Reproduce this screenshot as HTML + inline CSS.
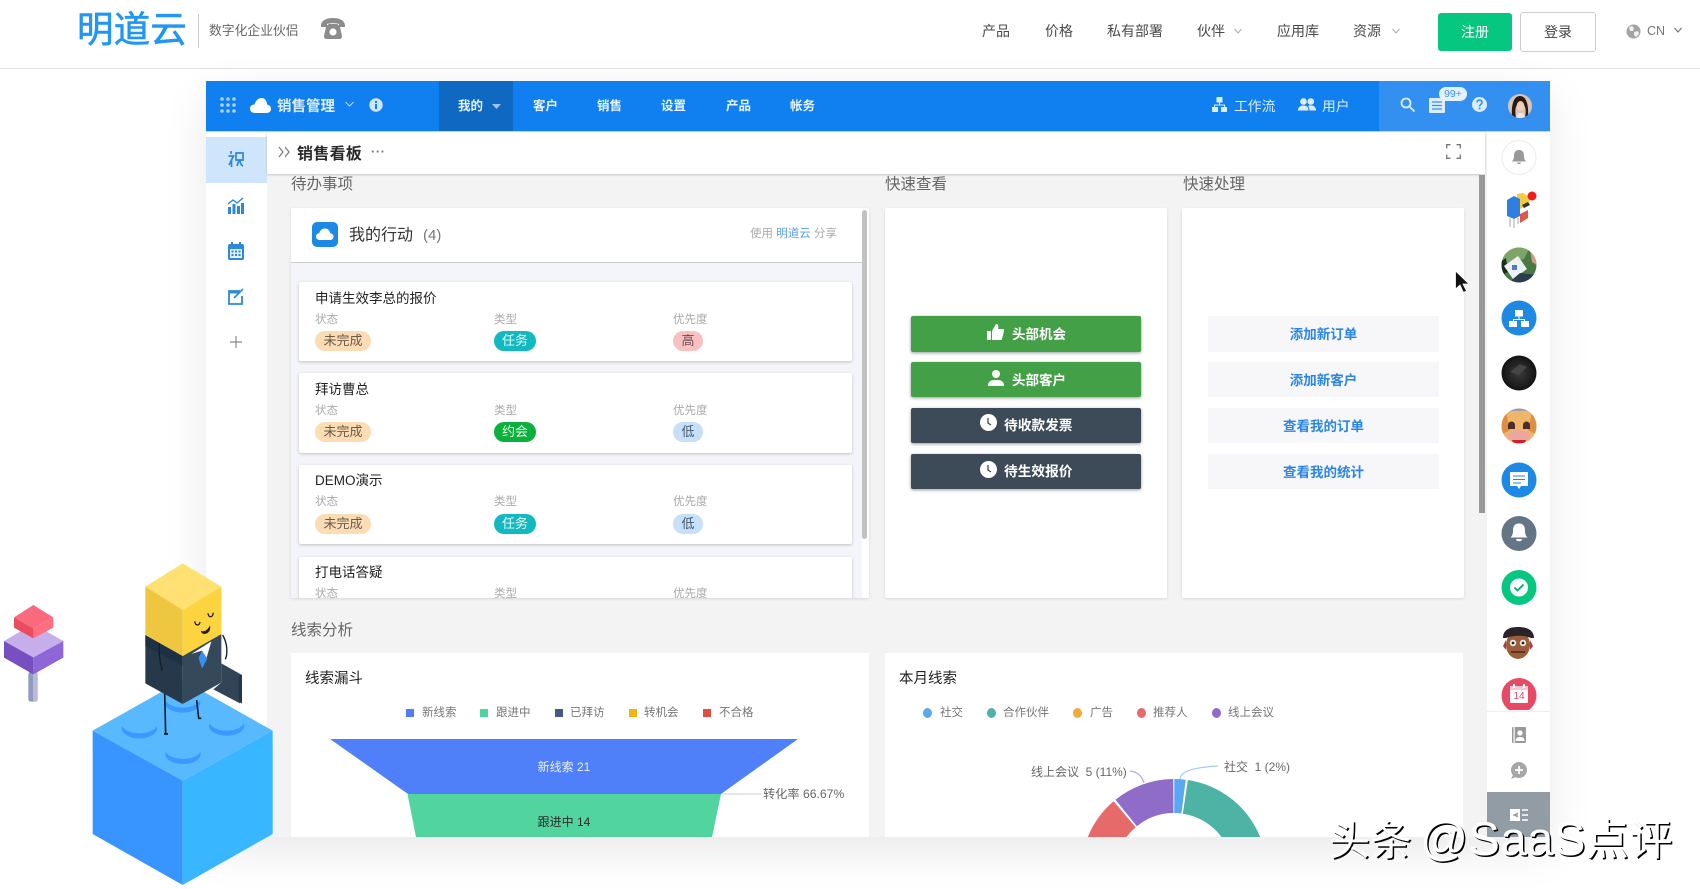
<!DOCTYPE html>
<html lang="zh"><head><meta charset="utf-8"><title>明道云</title>
<style>
html,body{margin:0;padding:0;background:#fff}
body{width:1700px;height:889px;position:relative;overflow:hidden;font-family:"Liberation Sans","Noto Sans CJK SC",sans-serif;color:#333;filter:blur(.3px)}
.a{position:absolute}
.t{position:absolute;white-space:nowrap;line-height:20px}
.nav{font-size:14px;color:#4a4a4a;top:21px}
.tab{font-size:12.5px;color:#e8f3ff;top:96px;font-weight:700}
.sec{font-size:15.5px;color:#666;line-height:20px}
.item{position:absolute;left:299px;width:553px;background:#fff;box-shadow:0 1px 3px rgba(0,0,0,.22);border-radius:2px;overflow:hidden}
.ttl{position:absolute;left:16px;top:calc(6px + var(--o));font-size:13.5px;color:#222;line-height:20px;white-space:nowrap}
.lb{position:absolute;top:calc(27px + var(--o));font-size:11.5px;color:#aaa;line-height:20px}
.pill{position:absolute;top:calc(48px + var(--o));height:20px;line-height:20px;border-radius:10px;text-align:center;font-size:13px}
.btn{position:absolute;left:911px;width:230px;border-radius:2px;box-shadow:0 1px 3px rgba(0,0,0,.4);color:#fff;font-size:13.5px;font-weight:700}
.btn2{position:absolute;left:1208px;width:231px;background:#f7f7f9;color:#2a86e6;font-size:13.5px;text-align:center;font-weight:700;line-height:37px}
.lg{font-size:11.5px;color:#777;top:703px}
.sq{position:absolute;top:709px;width:8px;height:8px}
.dot{position:absolute;top:708px;width:9px;height:10px;border-radius:50%}
</style></head><body>

<!-- top header -->
<div class="a" style="left:0;top:68px;width:1700px;height:1px;background:#e3e3e3"></div>
<div class="t" style="left:77px;top:10px;font-size:36.5px;line-height:40px;color:#2196f3;letter-spacing:.2px;-webkit-text-stroke:.6px #2196f3">明道云</div>
<div class="a" style="left:198px;top:14px;width:1px;height:34px;background:#ccc"></div>
<div class="t" style="left:209px;top:21px;font-size:12.8px;color:#666">数字化企业伙侣</div>
<svg class="a" style="left:321px;top:18px" width="24" height="22" viewBox="0 0 24 22"><path d="M0 8C0 2 6 0 12 0s12 2 12 8v1h-6V6c-3-1-9-1-12 0v3H0z" fill="#8c8c8c"/><path d="M5 9c1-2 3-3 3-3h8s2 1 3 3l2 9c0 2-1 3-3 3H6c-2 0-3-1-3-3z" fill="#8c8c8c"/><circle cx="12" cy="14" r="3.6" fill="#fff"/></svg>

<div class="t nav" style="left:982px">产品</div>
<div class="t nav" style="left:1045px">价格</div>
<div class="t nav" style="left:1107px">私有部署</div>
<div class="t nav" style="left:1197px">伙伴</div>
<svg class="a" style="left:1234px;top:28px" width="8" height="6"><path d="M.5 1l3.5 4 3.5-4" fill="none" stroke="#aaa"/></svg>
<div class="t nav" style="left:1277px">应用库</div>
<div class="t nav" style="left:1353px">资源</div>
<svg class="a" style="left:1392px;top:28px" width="8" height="6"><path d="M.5 1l3.5 4 3.5-4" fill="none" stroke="#aaa"/></svg>
<div class="a" style="left:1438px;top:13px;width:74px;height:38px;line-height:38px;background:#05c77f;border-radius:3px;color:#fff;text-align:center;font-size:14px">注册</div>
<div class="a" style="left:1520px;top:12px;width:74px;height:38px;line-height:39px;border:1px solid #ccc;border-radius:3px;color:#444;text-align:center;font-size:14px">登录</div>
<svg class="a" style="left:1626px;top:24px" width="15" height="15" viewBox="0 0 15 15"><circle cx="7.5" cy="7.5" r="7" fill="#a4a4a4"/><path d="M3 3l3-1 2 2-1 3-3 0zM8 8l4-1 1 3-3 3-2-2z" fill="#fff" opacity=".85"/></svg>
<div class="t" style="left:1647px;top:21px;font-size:12.5px;color:#777">CN</div>
<svg class="a" style="left:1674px;top:27px" width="8" height="6"><path d="M.5 1l3.5 4 3.5-4" fill="none" stroke="#666"/></svg>

<!-- app frame -->
<div class="a" style="left:206px;top:81px;width:1344px;height:756px;background:#fff;box-shadow:0 14px 42px rgba(0,0,0,.09)"></div>
<div class="a" style="left:206px;top:81px;width:1344px;height:50px;background:#1080f0"></div>
<div class="a" style="left:206px;top:131px;width:1344px;height:1px;background:#bcd9f6"></div>
<div class="a" style="left:439px;top:81px;width:74px;height:50px;background:#0f69c3"></div>
<div class="a" style="left:1379px;top:81px;width:171px;height:50px;background:#338ff0"></div>

<svg class="a" style="left:220px;top:97px" width="16" height="16" fill="#a9d2fb"><circle cx="2" cy="2" r="1.8"/><circle cx="8" cy="2" r="1.8"/><circle cx="14" cy="2" r="1.8"/><circle cx="2" cy="8" r="1.8"/><circle cx="8" cy="8" r="1.8"/><circle cx="14" cy="8" r="1.8"/><circle cx="2" cy="14" r="1.8"/><circle cx="8" cy="14" r="1.8"/><circle cx="14" cy="14" r="1.8"/></svg>
<svg class="a" style="left:250px;top:98px" width="21" height="15" viewBox="0 0 21 15"><path d="M5 15C2 15 0 13 0 10.500S2 6.500 4.500 6.500C5.500 3 8 0 11.500 0 15 0 17 3 17 6.500c2.500.5 4 2 4 4.500s-2 4-4.500 4z" fill="#fff"/></svg>
<div class="t" style="left:277px;top:97px;font-size:14.5px;font-weight:700;color:#dcedff">销售管理</div>
<svg class="a" style="left:345px;top:101px" width="9" height="6"><path d="M.5 1l4 4 4-4" fill="none" stroke="#bcdcff"/></svg>
<svg class="a" style="left:369px;top:98px" width="14" height="14"><circle cx="7" cy="7" r="6.700" fill="#cfe5fd"/><rect x="6" y="6" width="2" height="5" fill="#1080f0"/><rect x="6" y="3" width="2" height="2" fill="#1080f0"/></svg>

<div class="t tab" style="left:458px">我的</div>
<svg class="a" style="left:492px;top:104px" width="9" height="5"><path d="M0 0h9L4.500 5z" fill="#9cc6f2"/></svg>
<div class="t tab" style="left:533px">客户</div>
<div class="t tab" style="left:597px">销售</div>
<div class="t tab" style="left:661px">设置</div>
<div class="t tab" style="left:726px">产品</div>
<div class="t tab" style="left:790px">帐务</div>

<svg class="a" style="left:1212px;top:97px" width="15" height="15" fill="#dcedff"><rect x="4.500" y="0" width="6" height="5.500"/><rect x="0" y="10" width="6" height="5"/><rect x="9" y="10" width="6" height="5"/><path d="M7 5.500h1v2h5V10h-1V8.500H3V10H2V7.500h5z"/></svg>
<div class="t" style="left:1234px;top:97px;font-size:13.800px;color:#dcedff">工作流</div>
<svg class="a" style="left:1298px;top:98px" width="18" height="13" fill="#dcedff"><circle cx="5.500" cy="3.500" r="3.300"/><circle cx="12.800" cy="3.500" r="3.300"/><path d="M0 12.500c0-3 2-5 5.500-5s5 2 5 5zM11.500 12.500c0-2-.5-3.500-1.500-4.500 3-1.500 8-.5 8 4.500z"/></svg>
<div class="t" style="left:1322px;top:97px;font-size:13.800px;color:#dcedff">用户</div>
<svg class="a" style="left:1400px;top:97px" width="16" height="15" fill="none" stroke="#dcedff" stroke-width="1.800"><circle cx="6" cy="6" r="4.500"/><path d="M9.500 9.500l5 5"/></svg>
<svg class="a" style="left:1429px;top:98px" width="16" height="15"><rect width="16" height="15" rx="1" fill="#dcedff"/><path d="M3 4h10M3 7.500h10M3 11h10" stroke="#338ff0" stroke-width="1.300"/></svg>
<div class="a" style="left:1439px;top:87px;width:28px;height:14px;line-height:14px;border-radius:7px;background:#e4f1ff;color:#3d93ee;font-size:10.500px;text-align:center">99+</div>
<svg class="a" style="left:1472px;top:97px" width="15" height="15"><circle cx="7.500" cy="7.500" r="7.500" fill="#dcedff"/><path d="M5 5.500c0-3.300 5-3.300 5 0 0 2-2.500 2-2.500 4" fill="none" stroke="#338ff0" stroke-width="1.600"/><rect x="6.700" y="10.600" width="1.700" height="1.700" fill="#338ff0"/></svg>
<svg class="a" style="left:1508px;top:94px" width="24" height="24"><defs><clipPath id="av"><circle cx="12" cy="12" r="12"/></clipPath></defs><g clip-path="url(#av)"><rect width="24" height="24" fill="#d8c4b6"/><path d="M4 24C3 10 6 2 12 2s9 8 8 22h-3c1-6 1-10-1-13H9c-2 3-2 7-1 13z" fill="#2a1a16"/><path d="M8 24l2-5h5l2 5z" fill="#f2e4dc"/><ellipse cx="12.500" cy="12" rx="3.800" ry="5" fill="#efcdb6"/></g></svg>

<!-- left nav -->
<div class="a" style="left:206px;top:132px;width:61px;height:705px;background:#fff;box-shadow:1px 0 2px rgba(0,0,0,.06)"></div>
<div class="a" style="left:206px;top:137px;width:61px;height:46px;background:#cfe5fb"></div>
<svg class="a" style="left:228px;top:150px" width="16" height="18" fill="none" stroke="#2c88d8" stroke-width="1.700"><path d="M3 1v3M.5 6h5L1 15M3.500 10v7M8 3h7v7H8zM11 10l-2 6M12 10c0 3 1 5 3 6"/></svg>
<svg class="a" style="left:228px;top:197px" width="16" height="17" fill="#2c88d8"><rect x="0" y="10" width="3" height="7"/><rect x="4.500" y="7" width="3" height="10"/><rect x="9" y="9" width="3" height="8"/><rect x="13" y="6" width="3" height="11"/><path d="M0 7l5-4 4 3 6-5" fill="none" stroke="#2c88d8" stroke-width="1.400"/></svg>
<svg class="a" style="left:228px;top:242px" width="16" height="18"><rect y="2" width="16" height="16" rx="2" fill="#2c88d8"/><rect x="2" y="7" width="12" height="9" fill="#e3f0fb"/><rect x="3" y="0" width="2" height="4" fill="#2c88d8"/><rect x="11" y="0" width="2" height="4" fill="#2c88d8"/><g fill="#2c88d8"><rect x="3.500" y="8.500" width="2" height="2"/><rect x="7" y="8.500" width="2" height="2"/><rect x="10.500" y="8.500" width="2" height="2"/><rect x="3.500" y="12" width="2" height="2"/><rect x="7" y="12" width="2" height="2"/><rect x="10.500" y="12" width="2" height="2"/></g></svg>
<svg class="a" style="left:228px;top:288px" width="17" height="17" fill="none"><path d="M12 3H1v13h13V8" stroke="#2c88d8" stroke-width="1.800"/><path d="M6 10L15 1" stroke="#2c88d8" stroke-width="1.600"/><rect x="1" y="3" width="10" height="2.500" fill="#2c88d8"/></svg>
<svg class="a" style="left:230px;top:336px" width="12" height="12"><path d="M6 0v12M0 6h12" stroke="#888" stroke-width="1.200"/></svg>

<!-- content bg -->
<div class="a" style="left:267px;top:132px;width:1218px;height:705px;background:#f3f3f3"></div>
<div class="a" style="left:1485px;top:132px;width:2px;height:705px;background:#f2f2f2"></div>

<!-- section titles -->
<div class="t sec" style="left:291px;top:175px">待办事项</div>
<div class="t sec" style="left:885px;top:175px">快速查看</div>
<div class="t sec" style="left:1183px;top:175px">快速处理</div>

<!-- sub header -->
<div class="a" style="left:267px;top:132px;width:1218px;height:42px;background:#fff;box-shadow:0 1px 2px rgba(0,0,0,.18)"></div>
<svg class="a" style="left:278px;top:146px" width="13" height="12" fill="none" stroke="#777" stroke-width="1.200"><path d="M1 1l4 5-4 5M7 1l4 5-4 5"/></svg>
<div class="t" style="left:297px;top:143px;width:68px;font-size:16px;font-weight:700;color:#2a2a2a;letter-spacing:.3px;margin-top:2px">销售看板</div>
<div class="t" style="left:371px;top:142px;font-size:13px;color:#777;letter-spacing:.5px;font-weight:700">···</div>
<svg class="a" style="left:1446px;top:144px" width="15" height="15" fill="none" stroke="#777" stroke-width="1.300"><path d="M.7 4.500V.7h3.800M10.500.7h3.800v3.800M.7 10.500v3.800h3.800M10.500 14.300h3.800v-3.800"/></svg>
<div class="a" style="left:1479px;top:175px;width:6px;height:338px;background:#999"></div>

<!-- action card -->
<div class="a" style="left:291px;top:208px;width:578px;height:390px;background:#f4f5fa;box-shadow:0 1px 3px rgba(0,0,0,.12);overflow:hidden"></div>
<div class="a" style="left:862px;top:208px;width:7px;height:390px;background:#fff"></div>
<div class="a" style="left:291px;top:208px;width:571px;height:54px;background:#fff;border-bottom:1px solid #ccc"></div>
<div class="a" style="left:862px;top:210px;width:5px;height:329px;background:#c2c2c2;border-radius:3px"></div>
<svg class="a" style="left:312px;top:222px" width="26" height="25"><rect width="26" height="25" rx="5" fill="#1e88e5"/><path d="M8 18c-2.500 0-4-1.500-4-3.500s1.500-3 3.200-3.200C8 8.500 10 6.500 13 6.500c3 0 5 2.200 5.200 4.800 2 .2 3.300 1.500 3.300 3.300 0 2-1.500 3.400-3.500 3.400z" fill="#fff"/></svg>
<div class="t" style="left:349px;top:224px;margin-top:2px;font-size:16px;color:#333">我的行动</div>
<div class="t" style="left:423px;top:226px;font-size:15px;color:#777">(4)</div>
<div class="t" style="left:750px;top:224px;font-size:11.500px;color:#aaa;line-height:20px">使用 <span style="color:#5a9fe6">明道云</span> 分享</div>

<div class="a" style="left:291px;top:262px;width:571px;height:336px;overflow:hidden">
<div class="item" style="left:8px;top:20px;height:79px;--o:0.5px"><div class="ttl">申请生效李总的报价</div><div class="lb" style="left:16px">状态</div><div class="lb" style="left:195px">类型</div><div class="lb" style="left:374px">优先度</div><div class="pill" style="left:16px;width:56px;background:#fbdcb4;color:#6a5a48">未完成</div><div class="pill" style="left:195px;width:42px;background:#12b9c0;color:#e8ffff">任务</div><div class="pill" style="left:374px;width:30px;background:#f9c0c2;color:#6e4b4b">高</div></div>
<div class="item" style="left:8px;top:111px;height:80px;--o:0.5px"><div class="ttl">拜访曹总</div><div class="lb" style="left:16px">状态</div><div class="lb" style="left:195px">类型</div><div class="lb" style="left:374px">优先度</div><div class="pill" style="left:16px;width:56px;background:#fbdcb4;color:#6a5a48">未完成</div><div class="pill" style="left:195px;width:42px;background:#0cb03c;color:#e8ffe8">约会</div><div class="pill" style="left:374px;width:30px;background:#c5e0f8;color:#465868">低</div></div>
<div class="item" style="left:8px;top:203px;height:79px;--o:0px"><div class="ttl">DEMO演示</div><div class="lb" style="left:16px">状态</div><div class="lb" style="left:195px">类型</div><div class="lb" style="left:374px">优先度</div><div class="pill" style="left:16px;width:56px;background:#fbdcb4;color:#6a5a48;top:49px">未完成</div><div class="pill" style="left:195px;width:42px;background:#12b9c0;color:#e8ffff;top:49px">任务</div><div class="pill" style="left:374px;width:30px;background:#c5e0f8;color:#465868;top:49px">低</div></div>
<div class="item" style="left:8px;top:295px;height:79px;--o:0px"><div class="ttl">打电话答疑</div><div class="lb" style="left:16px">状态</div><div class="lb" style="left:195px">类型</div><div class="lb" style="left:374px">优先度</div></div>
</div>

<!-- quick view card -->
<div class="a" style="left:885px;top:208px;width:282px;height:390px;background:#fff;box-shadow:0 1px 3px rgba(0,0,0,.12);border-radius:2px"></div>
<div class="btn" style="top:316px;height:36px;background:#43a047"></div>
<div class="btn" style="top:362px;height:35px;background:#43a047"></div>
<div class="btn" style="top:408px;height:35px;background:#3c4b57"></div>
<div class="btn" style="top:454px;height:35px;background:#3c4b57"></div>
<svg class="a" style="left:987px;top:324px" width="17" height="16" fill="#fff"><rect x="0" y="7" width="4" height="9" rx="1"/><path d="M5 7l4-7c2 0 3 1 2 5h5c1 0 1.500 1 1 2l-2 8c0 .5-.5 1-1 1H5z"/></svg>
<div class="t" style="left:1012px;top:325px;font-size:13.500px;color:#fff;font-weight:700">头部机会</div>
<svg class="a" style="left:988px;top:370px" width="16" height="16" fill="#fff"><circle cx="8" cy="4" r="4"/><path d="M0 16c0-5 3-6 8-6s8 1 8 6z"/></svg>
<div class="t" style="left:1012px;top:371px;font-size:13.500px;color:#fff;font-weight:700">头部客户</div>
<svg class="a" style="left:980px;top:414px" width="17" height="17"><circle cx="8.500" cy="8.500" r="8.500" fill="#fff"/><path d="M8 4v5l3 2" fill="none" stroke="#3c4b57" stroke-width="1.300"/></svg>
<div class="t" style="left:1004px;top:416px;font-size:13.700px;color:#fff;font-weight:700">待收款发票</div>
<svg class="a" style="left:980px;top:461px" width="17" height="17"><circle cx="8.500" cy="8.500" r="8.500" fill="#fff"/><path d="M8 4v5l3 2" fill="none" stroke="#3c4b57" stroke-width="1.300"/></svg>
<div class="t" style="left:1004px;top:462px;font-size:13.700px;color:#fff;font-weight:700">待生效报价</div>

<!-- quick action card -->
<div class="a" style="left:1182px;top:208px;width:282px;height:390px;background:#fff;box-shadow:0 1px 3px rgba(0,0,0,.12);border-radius:2px"></div>
<div class="btn2" style="top:316px;height:36px">添加新订单</div>
<div class="btn2" style="top:362px;height:35px">添加新客户</div>
<div class="btn2" style="top:408px;height:35px">查看我的订单</div>
<div class="btn2" style="top:454px;height:35px">查看我的统计</div>

<div class="t sec" style="left:291px;top:621px">线索分析</div>

<!-- lower cards -->
<div class="a" style="left:291px;top:653px;width:578px;height:184px;background:#fff"></div>
<div class="a" style="left:885px;top:653px;width:578px;height:184px;background:#fff"></div>
<div class="t" style="left:305px;top:669px;font-size:14.500px;color:#222">线索漏斗</div>
<div class="t" style="left:899px;top:669px;font-size:14.500px;color:#222">本月线索</div>

<div class="sq" style="left:406px;background:#4f7ff0"></div><div class="t lg" style="left:422px">新线索</div>
<div class="sq" style="left:480px;background:#4fd39e"></div><div class="t lg" style="left:496px">跟进中</div>
<div class="sq" style="left:555px;background:#47578a"></div><div class="t lg" style="left:570px">已拜访</div>
<div class="sq" style="left:629px;background:#f2b50f"></div><div class="t lg" style="left:644px">转机会</div>
<div class="sq" style="left:703px;background:#e14c43"></div><div class="t lg" style="left:719px">不合格</div>

<svg class="a" style="left:291px;top:653px" width="578" height="184"><path d="M39 86H507L430 141H117z" fill="#4f80fa"/><path d="M116.500 141H430L421 184H125z" fill="#52d49f"/><path d="M430 141H470" stroke="#ccc" fill="none"/></svg>
<div class="t" style="left:524px;top:757px;width:80px;text-align:center;font-size:12px;color:#e8efff">新线索 21</div>
<div class="t" style="left:524px;top:812px;width:80px;text-align:center;font-size:12px;color:#2c2c2c">跟进中 14</div>
<div class="t" style="left:763px;top:784px;font-size:12.200px;color:#666">转化率 66.67%</div>

<div class="dot" style="left:923px;background:#5aa8f0"></div><div class="t lg" style="left:940px">社交</div>
<div class="dot" style="left:987px;background:#4db3a5"></div><div class="t lg" style="left:1003px">合作伙伴</div>
<div class="dot" style="left:1073px;background:#f4a93c"></div><div class="t lg" style="left:1090px">广告</div>
<div class="dot" style="left:1137px;background:#e66a6a"></div><div class="t lg" style="left:1153px">推荐人</div>
<div class="dot" style="left:1212px;background:#8e6cc8"></div><div class="t lg" style="left:1228px">线上会议</div>

<svg class="a" style="left:885px;top:653px" width="578" height="184" viewBox="885 653 578 184" fill="none">
<path d="M1174.300 779A93 93 0 0 1 1185.700 779.700L1181.400 813.500A59 59 0 0 0 1174.200 813Z" fill="#5aa8f0"/>
<path d="M1187.900 780A93 93 0 0 1 1260.200 837L1221.500 837A59 59 0 0 0 1182.800 813.700Z" fill="#4db3a5"/>
<path d="M1173.200 779A93 93 0 0 0 1115.500 799.700L1136.900 826.200A59 59 0 0 1 1173.500 813Z" fill="#8e6cc8"/>
<path d="M1113.600 801.300A93 93 0 0 0 1087.800 837L1126.500 837A59 59 0 0 1 1135.700 827.200Z" fill="#e66a6a"/>
<path d="M1130 771c8 1 12 5 14 12" stroke="#b6a8d6" stroke-width="1.200"/>
<path d="M1218 766c-18 1-38 4-38 13" stroke="#a4cdf3" stroke-width="1.200"/>
</svg>
<div class="t" style="left:1031px;top:762px;font-size:12px;color:#666">线上会议&nbsp; 5 (11%)</div>
<div class="t" style="left:1224px;top:757px;font-size:12px;color:#666">社交&nbsp; 1 (2%)</div>

<!-- right rail -->
<svg class="a" style="left:1487px;top:132px" width="63" height="705" viewBox="1487 132 63 705">
<rect x="1487" y="132" width="63" height="705" fill="#fff"/>
<circle cx="1519" cy="157.500" r="17" fill="#fff" stroke="#eee" stroke-width="1.200"/>
<path d="M1519 150c-4 0-5 3-5 6 0 3-1 4-2 5.500h14c-1-1.500-2-2.500-2-5.500 0-3-1-6-5-6zM1517 162.500h4c0 2-4 2-4 0z" fill="#999"/>
<!-- blocks icon -->
<path d="M1517 194l6-1 7 5-1 7-9 4-3-1z" fill="#f0cc3e"/>
<path d="M1507 200l7-4 6 3v17l-6 3-7-3z" fill="#2f7fe2"/>
<path d="M1520 214l8-4v8l-8 5z" fill="#e0564c"/>
<path d="M1522 205l6-3 2 3-6 3z" fill="#333"/>
<path d="M1510 218v9M1514 219v9M1518 218v6" stroke="#aaa" stroke-width="1"/>
<circle cx="1532" cy="196" r="4.500" fill="#f21d1d"/>
<!-- photo -->
<clipPath id="c1"><circle cx="1519" cy="265" r="17.500"/></clipPath>
<g clip-path="url(#c1)"><rect x="1500" y="247" width="38" height="38" fill="#4a7a44"/><path d="M1500 247h30l-6 12-24 6z" fill="#7da56a"/><path d="M1500 262l6-4 2 14-8 4z" fill="#1e2a22"/><path d="M1504 266l14-10 9 13-14 10z" fill="#eef2f5"/><path d="M1506 285l14-12 18 2v10z" fill="#2e3c50"/><path d="M1530 250l8 0v16l-6-4z" fill="#cf9a83"/><rect x="1512" y="265" width="5" height="5" fill="#4a7fc0"/></g>
<!-- blue org -->
<circle cx="1519" cy="318" r="17.500" fill="#1e88e5"/>
<g fill="#fff"><rect x="1515" y="310" width="8" height="6.500"/><rect x="1509" y="321" width="8" height="6"/><rect x="1521" y="321" width="8" height="6"/><path d="M1518.500 316.500h1v2.500h5.500v2h-1v-1h-10v1h-1v-2h5.500z"/></g>
<!-- black -->
<radialGradient id="g1" cx=".5" cy=".5" r=".6"><stop offset="0" stop-color="#3a3a3a"/><stop offset=".7" stop-color="#1a1a1a"/><stop offset="1" stop-color="#050505"/></radialGradient>
<circle cx="1519" cy="373" r="17.500" fill="url(#g1)"/><path d="M1510 372l10-8 7 3-8 8z" fill="#454545"/>
<!-- cartoon -->
<clipPath id="c2"><circle cx="1519" cy="426" r="17.500"/></clipPath>
<g clip-path="url(#c2)"><rect x="1500" y="408" width="38" height="38" fill="#efb568"/><path d="M1501 408h36v5c-8-3-26-3-36 0z" fill="#88a0bb"/><path d="M1501 418l5-6 4 18-9 5zM1537 418l-5-6-4 18 9 5z" fill="#dc8f42"/><ellipse cx="1519" cy="436" rx="11" ry="6" fill="#eaa7a0"/><path d="M1508 425a3 3 0 0 1 7 0v4h-7zM1523 425a3 3 0 0 1 7 0v4h-7z" fill="#4a2e2e"/><path d="M1512 440h14l-2 5h-10z" fill="#c9222c"/></g>
<!-- chat -->
<circle cx="1519" cy="480" r="17.500" fill="#1e88e5"/>
<path d="M1510 472h18v14h-7l-2 3-2-3h-7z" fill="#fff"/><path d="M1513 476h12M1513 479.500h12M1513 483h8" stroke="#1e88e5" stroke-width="1"/>
<!-- bell grey -->
<circle cx="1519" cy="533.500" r="17.500" fill="#647585"/>
<path d="M1519 523.500c-5 0-6 4-6 7 0 4-1 5.500-2.500 7h17c-1.500-1.500-2.500-3-2.500-7 0-3-1-7-6-7zM1516 539h6c0 3-6 3-6 0z" fill="#fff"/>
<!-- check -->
<circle cx="1519" cy="587.500" r="17.500" fill="#05c77f"/><circle cx="1519" cy="587.500" r="9" fill="#fff"/><path d="M1514.500 587.500l3 3 6-6" fill="none" stroke="#05a86c" stroke-width="1.800"/>
<!-- face -->
<ellipse cx="1518" cy="645" rx="12" ry="14" fill="#9a5f3a"/><path d="M1503 638c0-9 8-11 15-11s16 2 16 11l-3 0c-7-3-17-3-25 0z" fill="#2a2226"/><path d="M1506 640l-3 6 3 4zM1530 640l3 6-3 4z" fill="#b23a3a"/><circle cx="1513" cy="643" r="3.200" fill="#eee"/><circle cx="1523" cy="643" r="3.200" fill="#eee"/><circle cx="1513" cy="643" r="1.400" fill="#222"/><circle cx="1523" cy="643" r="1.400" fill="#222"/><path d="M1511 652h14" stroke="#5e3520" stroke-width="2"/>
<!-- calendar -->
<clipPath id="c3"><rect x="1500" y="670" width="38" height="40"/></clipPath>
<circle cx="1519" cy="695.500" r="17.500" fill="#e84a66" clip-path="url(#c3)"/>
<rect x="1510" y="686" width="18" height="17" rx="1" fill="#fff"/><rect x="1510" y="686" width="18" height="4" fill="#f7c9d2"/><rect x="1513" y="684" width="2" height="4" fill="#fff"/><rect x="1523" y="684" width="2" height="4" fill="#fff"/>
<rect x="1487" y="711" width="63" height="1" fill="#eee"/>
<!-- contact -->
<rect x="1512" y="727" width="14" height="16" rx="1" fill="#9a9a9a"/><circle cx="1520" cy="733" r="2.600" fill="#fff"/><path d="M1515.500 741c0-3 2-4 4.500-4s4.500 1 4.500 4z" fill="#fff"/><rect x="1513.500" y="727" width="1.200" height="16" fill="#fff"/>
<circle cx="1519" cy="770" r="8" fill="#a6a6a6"/><path d="M1513 775l-2 4 5-2z" fill="#a6a6a6"/><path d="M1519 766v8M1515 770h8" stroke="#fff" stroke-width="1.700"/>
<rect x="1487" y="792" width="63" height="45" fill="#929ca5"/>
<rect x="1510" y="809" width="10" height="12" fill="#fff"/><path d="M1518 813l-4 2 4 2M1518 815h-5" stroke="#929ca5" stroke-width="1.200" fill="none"/><path d="M1522 810h6M1522 815h6M1522 820h6" stroke="#fff" stroke-width="1.400"/>
</svg>
<div class="t" style="left:1510px;top:687px;width:18px;text-align:center;font-size:10px;color:#e84a66;line-height:20px">14</div>
<!-- cursor -->
<svg class="a" style="left:1454px;top:270px" width="16" height="24"><path d="M1.500 1v18l4.500-4 3.500 7.500 3-1.500-3.500-7h6z" fill="#111" stroke="#fff" stroke-width=".8"/></svg>

<!-- illustration -->
<svg class="a" style="left:0;top:560px" width="290" height="329" viewBox="0 0 870 987">
<path d="M278 512L548 360 818 512 548 662z" fill="#58b9ff"/>
<path d="M278 512L548 662V975L278 822z" fill="#3895ff"/>
<path d="M818 512L548 662V975L818 822z" fill="#38b6ff"/>
<g fill="#3a98ff"><ellipse cx="418" cy="505" rx="53" ry="30"/><ellipse cx="680" cy="497" rx="53" ry="30"/><ellipse cx="549" cy="582" rx="53" ry="30"/><ellipse cx="548" cy="428" rx="53" ry="30"/></g>
<g fill="#58b9ff"><ellipse cx="418" cy="492" rx="53" ry="28"/><ellipse cx="680" cy="484" rx="53" ry="28"/><ellipse cx="549" cy="569" rx="53" ry="28"/><ellipse cx="548" cy="415" rx="53" ry="28"/></g>
<path d="M494 395l3 128M590 420l6 55" stroke="#111e2d" stroke-width="5" fill="none"/>
<path d="M492 522h12M594 475h10" stroke="#111e2d" stroke-width="5"/>
<!-- body -->
<path d="M436 225L548 288V432L436 370z" fill="#26394a"/>
<path d="M664 222L548 288V432L664 368z" fill="#35495a"/>
<path d="M436 225L548 288V318L436 258z" fill="#1c3146"/>
<path d="M664 310L726 345 720 430 640 388 664 368z" fill="#324556"/>
<path d="M726 345V430L716 426V350z" fill="#24384a"/>
<path d="M574 282L634 244 618 300 606 272z" fill="#fff"/>
<path d="M606 272L622 296 606 326 596 294z" fill="#3a8ff2"/>
<path d="M480 235C474 270 480 310 487 332M668 225C682 250 684 280 676 298" stroke="#111e2d" stroke-width="4" fill="none"/>
<!-- head -->
<path d="M436 80L548 10 664 80 548 150z" fill="#ffe072"/>
<path d="M436 80L548 150V288L436 225z" fill="#eec63f"/>
<path d="M664 80L548 150V288L664 222z" fill="#fcd440"/>
<path d="M584 184c2 14 14 14 16 2M624 160c2 14 14 14 16 -2" stroke="#221c10" stroke-width="4" fill="none"/>
<path d="M603 212c10 6 22-4 27-16 3 14-4 24-16 26-8 0-11-5-11-10z" fill="#221c10"/>
<!-- pin -->
<rect x="85" y="335" width="28" height="90" rx="8" fill="#8f9abf"/><rect x="99" y="335" width="14" height="90" rx="6" fill="#b7bdd7"/>
<path d="M12 243L100 192 190 243 100 292z" fill="#c6aeea"/>
<path d="M12 243L100 292V343L12 293z" fill="#784fc0"/>
<path d="M190 243L100 292V343L190 293z" fill="#8e66d8"/>
<path d="M42 172L100 135 160 172 100 205z" fill="#f96a7d"/>
<path d="M42 172L100 205V235L42 203z" fill="#ec4a5e"/>
<path d="M160 172L100 205V235L160 203z" fill="#ff6f80"/>
</svg>

<!-- watermark -->
<div class="t" style="left:1329px;top:814px;font-size:41px;line-height:50px;color:#fff;text-shadow:1.500px 1.500px 0 #000;letter-spacing:.6px">头条 <span style="font-size:47px;margin-left:-4px">@SaaS</span><span style="font-size:43px">点评</span></div>

</body></html>
